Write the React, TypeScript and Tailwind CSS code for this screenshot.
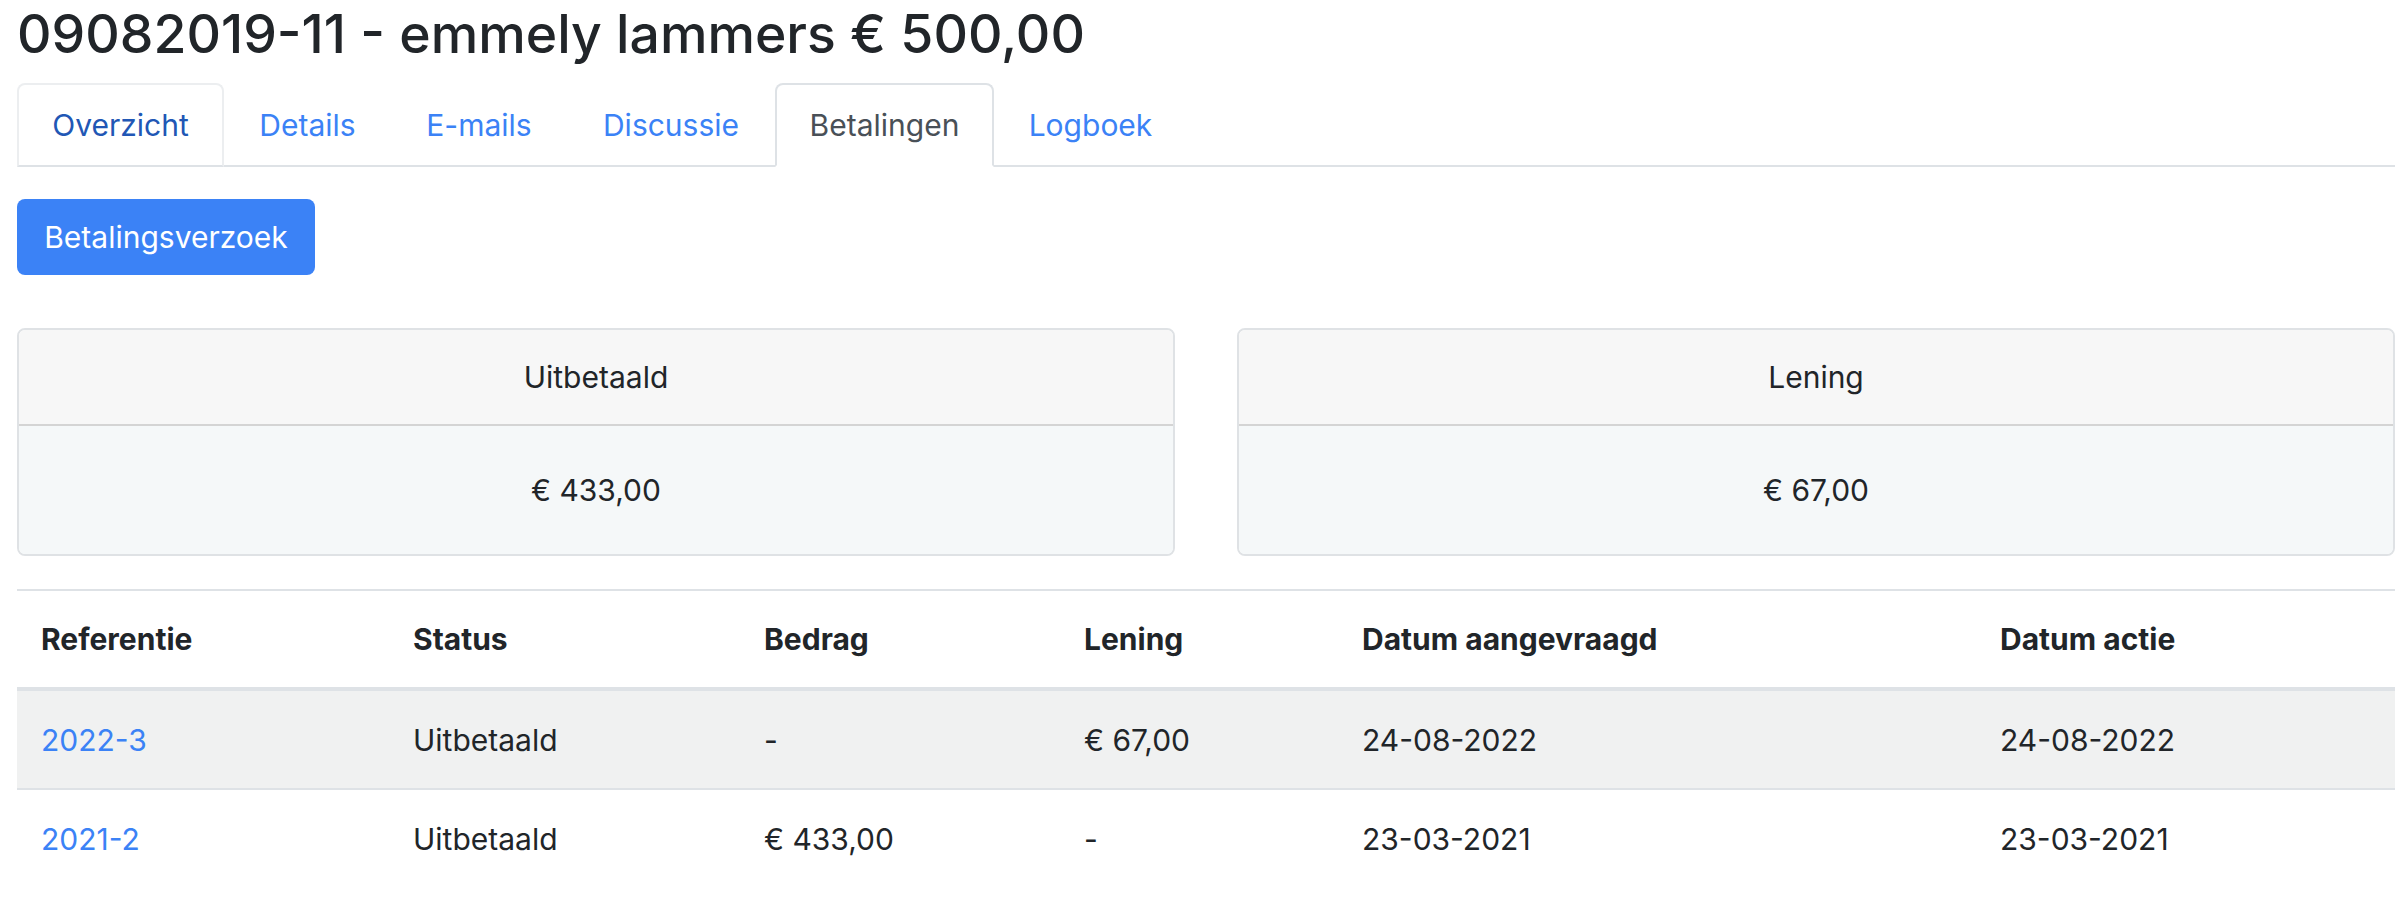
import React from 'react';

interface TabItem {
  label: string;
  width: string;
  state: 'hover' | 'active' | 'idle';
}

const tabs: TabItem[] = [
  { label: 'Overzicht', width: 'w-[207px]', state: 'hover' },
  { label: 'Details', width: 'w-[167px]', state: 'idle' },
  { label: 'E-mails', width: 'w-[176px]', state: 'idle' },
  { label: 'Discussie', width: 'w-[208px]', state: 'idle' },
  { label: 'Betalingen', width: 'w-[219px]', state: 'active' },
  { label: 'Logboek', width: 'w-[193px]', state: 'idle' },
];

interface Payment {
  ref: string;
  status: string;
  bedrag: string;
  lening: string;
  aangevraagd: string;
  actie: string;
}

const payments: Payment[] = [
  { ref: '2022-3', status: 'Uitbetaald', bedrag: '-', lening: '€ 67,00', aangevraagd: '24-08-2022', actie: '24-08-2022' },
  { ref: '2021-2', status: 'Uitbetaald', bedrag: '€ 433,00', lening: '-', aangevraagd: '23-03-2021', actie: '23-03-2021' },
];

const cols = 'grid grid-cols-[372px_351px_320px_278px_638px_1fr]';

const SummaryCard: React.FC<{ title: string; amount: string }> = ({ title, amount }) => (
  <div className="flex-1 border-2 border-[#dfe2e5] rounded-[8px] overflow-hidden">
    <div className="h-[96px] bg-[#f7f7f7] border-b-2 border-[#d4d4d4] flex items-center justify-center">
      {title}
    </div>
    <div className="h-[128px] bg-[#f5f8f9] flex items-center justify-center">{amount}</div>
  </div>
);

export default function App() {
  return (
    <div
      className="bg-white min-h-screen pl-[17px] pr-[11px] text-[#212529] text-[30px] leading-[48px]"
      style={{ fontFamily: 'Inter, "Noto Sans", sans-serif' }}
    >
      <h3 className="text-[53.5px] leading-[67px] font-medium mb-[16px]">09082019-11 - emmely lammers € 500,00</h3>

      {/* tabs */}
      <div className="flex border-b-2 border-[#dee2e6]">
        {tabs.map((t) => (
          <div
            key={t.label}
            className={`${t.width} h-[84px] -mb-[2px] flex items-center justify-center rounded-t-[8px] border-2 ${
              t.state === 'active'
                ? 'border-[#dee2e6] border-b-white bg-white text-[#495057]'
                : t.state === 'hover'
                ? 'border-[#eceef0] border-b-[#dee2e6] text-[#2157b5]'
                : 'border-transparent text-[#3b82f6]'
            }`}
          >
            {t.label}
          </div>
        ))}
      </div>

      <button className="mt-[32px] h-[76px] w-[298px] rounded-[8px] bg-[#3b82f6] text-white">
        Betalingsverzoek
      </button>

      <div className="flex gap-[62px] mt-[53px]">
        <SummaryCard title="Uitbetaald" amount="€ 433,00" />
        <SummaryCard title="Lening" amount="€ 67,00" />
      </div>

      {/* payments table */}
      <div className="mt-[33px]">
        <div className={`${cols} border-t-2 border-b-4 border-[#dee2e6] font-bold`}>
          {['Referentie', 'Status', 'Bedrag', 'Lening', 'Datum aangevraagd', 'Datum actie'].map((h) => (
            <div key={h} className="px-[24px] h-[96px] flex items-center">
              {h}
            </div>
          ))}
        </div>
        {payments.map((p, i) => (
          <div
            key={p.ref}
            className={`${cols} ${i === 0 ? 'bg-[#f0f1f1] border-b-2 border-[#dee2e6]' : ''}`}
          >
            <div className="px-[24px] h-[97px] flex items-center text-[#3b82f6]">{p.ref}</div>
            <div className="px-[24px] h-[97px] flex items-center">{p.status}</div>
            <div className="px-[24px] h-[97px] flex items-center">{p.bedrag}</div>
            <div className="px-[24px] h-[97px] flex items-center">{p.lening}</div>
            <div className="px-[24px] h-[97px] flex items-center">{p.aangevraagd}</div>
            <div className="px-[24px] h-[97px] flex items-center">{p.actie}</div>
          </div>
        ))}
      </div>
    </div>
  );
}
